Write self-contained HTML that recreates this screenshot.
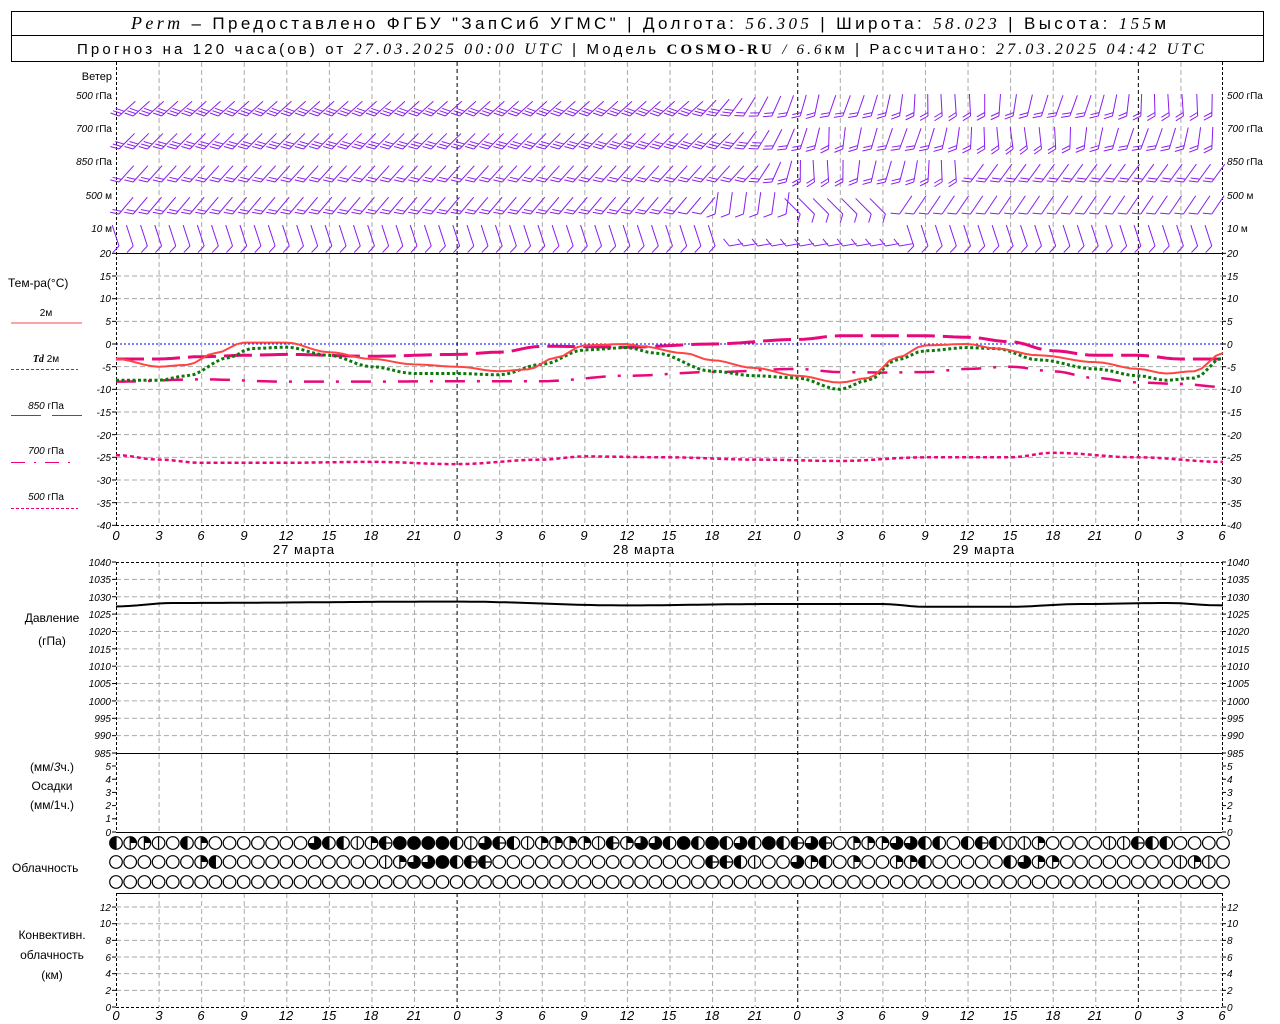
<!DOCTYPE html>
<html><head><meta charset="utf-8">
<style>
html,body{margin:0;padding:0;background:#fff;}
svg{display:block;}
text{font-family:"Liberation Sans",sans-serif;fill:#000;}
.n{font-size:10px;font-style:italic;}
.l{font-size:12px;}
.t{font-family:"Liberation Serif",serif;font-style:italic;}
</style></head><body>
<svg id="s" width="1280" height="1024" viewBox="0 0 1280 1024" xmlns="http://www.w3.org/2000/svg">
<rect x="11.5" y="11.5" width="1252" height="50" fill="none" stroke="#000"/>
<line x1="11" y1="35.5" x2="1264" y2="35.5" stroke="#000"/>
<text x="131" y="29" textLength="1035" lengthAdjust="spacing" style="font-size:17px"><tspan class="t" style="font-size:18px">Perm</tspan> – Предоставлено ФГБУ "ЗапСиб УГМС" | Долгота: <tspan class="t">56.305</tspan> | Широта: <tspan class="t">58.023</tspan> | Высота: <tspan class="t">155</tspan>м</text>
<text x="77" y="54" textLength="1127" lengthAdjust="spacing" style="font-size:15px">Прогноз на 120 часа(ов) от <tspan class="t" style="font-size:16px">27.03.2025 00:00 UTC</tspan>  | Модель <tspan style="font-family:'Liberation Serif',serif;font-weight:bold">COSMO-RU</tspan> <tspan class="t">/ 6.6</tspan>км | Рассчитано: <tspan class="t" style="font-size:16px">27.03.2025 04:42 UTC</tspan></text>
<g id="grid"></g>
<g id="data"></g>
<!-- left labels -->
<text x="112" y="80" text-anchor="end" class="l" style="font-size:11px">Ветер</text>
<g style="font-size:10px">
<text x="112" y="99" text-anchor="end"><tspan font-style="italic">500</tspan> гПа</text>
<text x="112" y="132" text-anchor="end"><tspan font-style="italic">700</tspan> гПа</text>
<text x="112" y="165" text-anchor="end"><tspan font-style="italic">850</tspan> гПа</text>
<text x="112" y="199" text-anchor="end"><tspan font-style="italic">500</tspan> м</text>
<text x="112" y="232" text-anchor="end"><tspan font-style="italic">10</tspan>   м</text>
<text x="1227" y="99"><tspan font-style="italic">500</tspan> гПа</text>
<text x="1227" y="132"><tspan font-style="italic">700</tspan> гПа</text>
<text x="1227" y="165"><tspan font-style="italic">850</tspan> гПа</text>
<text x="1227" y="199"><tspan font-style="italic">500</tspan> м</text>
<text x="1227" y="232"><tspan font-style="italic">10</tspan>   м</text>
</g>
<text x="8" y="287" class="l">Тем-ра(°С)</text>
<text x="46" y="316" text-anchor="middle" style="font-size:10px">2м</text>
<line x1="11" y1="323" x2="82" y2="323" stroke="#f44" stroke-width="1"/>
<text x="46" y="362" text-anchor="middle" style="font-size:10px"><tspan font-style="italic" font-weight="bold" font-family="Liberation Serif">Td</tspan>  2м</text>
<line x1="11" y1="369.5" x2="78" y2="369.5" stroke="#080" stroke-dasharray="3,2"/>
<text x="46" y="409" text-anchor="middle" style="font-size:10px"><tspan font-style="italic">850</tspan> гПа</text>
<line x1="11" y1="415.5" x2="41" y2="415.5" stroke="#e07"/><line x1="52" y1="415.5" x2="82" y2="415.5" stroke="#e07"/>
<text x="46" y="454" text-anchor="middle" style="font-size:10px"><tspan font-style="italic">700</tspan> гПа</text>
<line x1="11" y1="462.5" x2="78" y2="462.5" stroke="#e07" stroke-dasharray="14,9,2,9"/>
<text x="46" y="500" text-anchor="middle" style="font-size:10px"><tspan font-style="italic">500</tspan> гПа</text>
<line x1="11" y1="508.5" x2="78" y2="508.5" stroke="#e07" stroke-dasharray="3,2"/>
<text x="52" y="622" text-anchor="middle" class="l">Давление</text>
<text x="52" y="645" text-anchor="middle" class="l">(гПа)</text>
<text x="52" y="771" text-anchor="middle" class="l">(мм/<tspan font-style="italic">3</tspan>ч.)</text>
<text x="52" y="790" text-anchor="middle" class="l">Осадки</text>
<text x="52" y="809" text-anchor="middle" class="l">(мм/1ч.)</text>
<text x="12" y="872" class="l">Облачность</text>
<text x="52" y="939" text-anchor="middle" class="l">Конвективн.</text>
<text x="52" y="959" text-anchor="middle" class="l">облачность</text>
<text x="52" y="979" text-anchor="middle" class="l">(км)</text>
<!-- temp axis -->
<g class="n" text-anchor="end">
<text x="111" y="257">20</text><text x="111" y="280">15</text><text x="111" y="302">10</text><text x="111" y="325">5</text><text x="111" y="348">0</text><text x="111" y="371">-5</text><text x="111" y="393">-10</text><text x="111" y="416">-15</text><text x="111" y="439">-20</text><text x="111" y="461">-25</text><text x="111" y="484">-30</text><text x="111" y="507">-35</text><text x="111" y="529">-40</text>
<text x="111" y="566">1040</text><text x="111" y="583">1035</text><text x="111" y="601">1030</text><text x="111" y="618">1025</text><text x="111" y="635">1020</text><text x="111" y="653">1015</text><text x="111" y="670">1010</text><text x="111" y="687">1005</text><text x="111" y="705">1000</text><text x="111" y="722">995</text><text x="111" y="739">990</text><text x="111" y="757">985</text>
<text x="111" y="770">5</text><text x="111" y="783">4</text><text x="111" y="796">3</text><text x="111" y="809">2</text><text x="111" y="822">1</text><text x="111" y="836">0</text>
<text x="111" y="911">12</text><text x="111" y="927">10</text><text x="111" y="944">8</text><text x="111" y="961">6</text><text x="111" y="977">4</text><text x="111" y="994">2</text><text x="111" y="1011">0</text>
</g>
<g class="n">
<text x="1227" y="257">20</text><text x="1227" y="280">15</text><text x="1227" y="302">10</text><text x="1227" y="325">5</text><text x="1227" y="348">0</text><text x="1227" y="371">-5</text><text x="1227" y="393">-10</text><text x="1227" y="416">-15</text><text x="1227" y="439">-20</text><text x="1227" y="461">-25</text><text x="1227" y="484">-30</text><text x="1227" y="507">-35</text><text x="1227" y="529">-40</text>
<text x="1227" y="566">1040</text><text x="1227" y="583">1035</text><text x="1227" y="601">1030</text><text x="1227" y="618">1025</text><text x="1227" y="635">1020</text><text x="1227" y="653">1015</text><text x="1227" y="670">1010</text><text x="1227" y="687">1005</text><text x="1227" y="705">1000</text><text x="1227" y="722">995</text><text x="1227" y="739">990</text><text x="1227" y="757">985</text>
<text x="1227" y="770">5</text><text x="1227" y="783">4</text><text x="1227" y="796">3</text><text x="1227" y="809">2</text><text x="1227" y="822">1</text><text x="1227" y="836">0</text>
<text x="1227" y="911">12</text><text x="1227" y="927">10</text><text x="1227" y="944">8</text><text x="1227" y="961">6</text><text x="1227" y="977">4</text><text x="1227" y="994">2</text><text x="1227" y="1011">0</text>
</g>
<g style="font-size:13px;font-style:italic" text-anchor="middle">
<text x="116" y="540">0</text><text x="159" y="540">3</text><text x="201" y="540">6</text><text x="244" y="540">9</text><text x="286" y="540">12</text><text x="329" y="540">15</text><text x="371" y="540">18</text><text x="414" y="540">21</text><text x="457" y="540">0</text><text x="499" y="540">3</text><text x="542" y="540">6</text><text x="584" y="540">9</text><text x="627" y="540">12</text><text x="669" y="540">15</text><text x="712" y="540">18</text><text x="755" y="540">21</text><text x="797" y="540">0</text><text x="840" y="540">3</text><text x="882" y="540">6</text><text x="925" y="540">9</text><text x="967" y="540">12</text><text x="1010" y="540">15</text><text x="1053" y="540">18</text><text x="1095" y="540">21</text><text x="1138" y="540">0</text><text x="1180" y="540">3</text><text x="1222" y="540">6</text>
<text x="116" y="1020">0</text><text x="159" y="1020">3</text><text x="201" y="1020">6</text><text x="244" y="1020">9</text><text x="286" y="1020">12</text><text x="329" y="1020">15</text><text x="371" y="1020">18</text><text x="414" y="1020">21</text><text x="457" y="1020">0</text><text x="499" y="1020">3</text><text x="542" y="1020">6</text><text x="584" y="1020">9</text><text x="627" y="1020">12</text><text x="669" y="1020">15</text><text x="712" y="1020">18</text><text x="755" y="1020">21</text><text x="797" y="1020">0</text><text x="840" y="1020">3</text><text x="882" y="1020">6</text><text x="925" y="1020">9</text><text x="967" y="1020">12</text><text x="1010" y="1020">15</text><text x="1053" y="1020">18</text><text x="1095" y="1020">21</text><text x="1138" y="1020">0</text><text x="1180" y="1020">3</text><text x="1222" y="1020">6</text>
</g>
<g style="font-size:13px;letter-spacing:1px" text-anchor="middle">
<text x="304" y="554">27 марта</text><text x="644" y="554">28 марта</text><text x="984" y="554">29 марта</text>
</g>
</svg>
<script>
(function(){
var NS="http://www.w3.org/2000/svg";
var G=document.getElementById('grid'),D=document.getElementById('data');
function el(p,tag,a){var e=document.createElementNS(NS,tag);for(var k in a)e.setAttribute(k,a[k]);p.appendChild(e);return e;}
function X(h){return 116+h*1107/78;}
function line(p,x1,y1,x2,y2,st,w,da){var a={x1:x1,y1:y1,x2:x2,y2:y2,stroke:st,'stroke-width':w||1};if(da)a['stroke-dasharray']=da;return el(p,'line',a);}
for(var v=15;v>=-35;v-=5){var y=344-v*4.533;line(G,116,y,1222,y,v==0?'#00f':'#aaa',1,v==0?'2,2':'5,3');}
for(var v=1035;v>=990;v-=5){var y=562+(1040-v)*3.473;line(G,116,y,1222,y,'#aaa',1,'5,3');}
for(var v=2;v<=12;v+=2){var y=1007-v*8.33;line(G,116,y,1222,y,'#aaa',1,'5,3');}
var segs=[[62,525],[562,832],[893,1007]];
for(var h=3;h<78;h+=3){var x=X(h)+0.5,day=(h%24==0);
 segs.forEach(function(s){line(G,x,s[0],x,s[1],day?'#000':'#aaa',1,day?'4,3':'5,3');});}
segs.forEach(function(s){line(G,116.5,s[0],116.5,s[1],'#000',1,'3,2');line(G,1222.5,s[0],1222.5,s[1],'#000',1,'3,2');});
function ticks(a){a.forEach(function(y){line(G,112,y,116,y,'#000');line(G,1222,y,1226,y,'#000');});}
var ty=[];for(var v=20;v>=-40;v-=5)ty.push(344-v*4.533);ticks(ty);
ty=[];for(var v=1040;v>=985;v-=5)ty.push(562+(1040-v)*3.473);ticks(ty);
ty=[];for(var v=0;v<=5;v++)ty.push(832-v*13.2);ticks(ty);
ty=[];for(var v=0;v<=12;v+=2)ty.push(1007-v*8.33);ticks(ty);
line(G,116,253.5,1222,253.5,'#000');line(G,116,525.5,1222,525.5,'#000',1,'3,2');
line(G,116,562.5,1222,562.5,'#000',1,'3,2');line(G,116,753.5,1222,753.5,'#000');
line(G,116,832.5,1222,832.5,'#000');line(G,116,893.5,1222,893.5,'#000');line(G,116,1007.5,1222,1007.5,'#000',1,'3,2');
function interp(pts,h){for(var i=0;i<pts.length-1;i++){if(h<=pts[i+1][0]){var a=pts[i],b=pts[i+1],t=(h-a[0])/(b[0]-a[0]);t=(1-Math.cos(t*Math.PI))/2;return a[1]+(b[1]-a[1])*t;}}return pts[pts.length-1][1];}
function curve(pts,fy,col,w,da){var d='';for(var h=0;h<=78;h+=0.5){d+=(h?'L':'M')+X(h).toFixed(1)+','+fy(interp(pts,h)).toFixed(1);}var a={d:d,fill:'none',stroke:col,'stroke-width':w};if(da)a['stroke-dasharray']=da;el(D,'path',a);}
function TY(v){return 344-v*4.533;}
curve([[0,-8.3],[6,-7.8],[12,-8.3],[18,-8.3],[24,-8.2],[30,-8.2],[36,-7],[42,-6.2],[48,-5.5],[51,-6.2],[54,-6.3],[57,-6.2],[60,-5.5],[63,-5],[66,-6],[69,-7.5],[72,-8.5],[75,-8.8],[78,-9.5]],TY,'#e8087a',2.5,'20,12,3,12');
curve([[0,-3.3],[3,-3.3],[6,-2.8],[9,-2.5],[12,-2.3],[18,-2.7],[24,-2.3],[27,-1.8],[30,-0.5],[36,-0.7],[42,0],[48,1],[51,1.8],[57,1.8],[60,1.5],[63,0.5],[66,-1.5],[69,-2.5],[72,-2.5],[75,-3.3],[78,-3.3]],TY,'#e8087a',3,'28,8');
curve([[0,-24.5],[3,-25.5],[6,-26.2],[12,-26.2],[18,-26],[24,-26.5],[30,-25.5],[33,-24.8],[39,-25],[45,-25.5],[51,-25.8],[57,-25],[63,-25],[66,-24],[72,-25],[78,-26]],TY,'#e8087a',2.5,'4,3');
curve([[0,-8],[3,-8],[5,-7],[8,-3],[9.5,-1],[12,-0.7],[15,-2.5],[18,-5],[21,-6.5],[24,-6.5],[27,-6.8],[30,-4.5],[33,-1.3],[36,-0.8],[38,-2],[42,-6],[45,-7],[48,-7.5],[51,-10],[53,-8],[55,-3.5],[57,-1.5],[60,-0.8],[62,-1],[65,-3.5],[69,-5.5],[72,-7],[74,-8],[76,-7.5],[78,-3]],TY,'#0a7a0a',3,'3,2.5');
curve([[0,-3.3],[3,-5],[5,-4.6],[7,-2],[9,0.3],[12,0.3],[15,-1.8],[18,-3.3],[21,-4.5],[24,-5],[27,-6],[29,-5.6],[31,-3],[33,-0.3],[36,0],[37,-0.5],[40,-2],[42,-3.6],[45,-5.3],[48,-7],[51,-8.5],[53,-7.5],[55,-3],[57,-0.3],[60,0],[62,-1],[65,-2.5],[69,-4],[72,-5.5],[74,-6.5],[76,-6],[78,-2]],TY,'#f44',2);
curve([[0,1027.2],[4,1028.2],[24,1028.6],[36,1027.5],[46,1027.9],[54,1027.9],[57,1027.1],[63,1027.1],[68,1027.9],[74,1028.2],[78,1027.5]],function(v){return 562+(1040-v)*3.473;},'#000',2);
var PUR='#8a1cf0';
var lev=[
 {y:116,f:function(h){return h<40?48:h<50?48-(h-40)*4:8+12*Math.sin(h/2.5);},n:function(h){return h<44?3:2;}},
 {y:149,f:function(h){return h<42?45:h<50?45-(h-42)*4.5:6+14*Math.sin(h/2.7);},n:function(h){return h<46?3:2;}},
 {y:182,f:function(h){return h<44?42:h<48?42-(h-44)*9:h<60?6-10*Math.sin(h/1.5):36;},n:function(h){return 2;}},
 {y:214,f:function(h){return h<42?40:h<48?8:h<55?-45:34;},n:function(h){return h<40?2:1;}},
 {y:246,f:function(h){return (h>42&&h<56)?80:-18;},n:function(h){return 1;}}
];
lev.forEach(function(L,li){
 for(var h=0;h<=77;h++){
  var x=X(h)+3,a=L.f(h)*Math.PI/180,len=(li==4&&h>42&&h<56)?14:22;
  var tx=x+Math.sin(a)*len,ty=L.y-Math.cos(a)*len;
  line(D,x,L.y,tx,ty,PUR,1);
  var n=L.n(h);
  for(var k=0;k<n;k++){
   var bx=x+Math.sin(a)*k*3.5,by=L.y-Math.cos(a)*k*3.5;
   var fa=a-Math.PI/2-0.5;
   line(D,bx,by,bx+Math.sin(fa)*9,by-Math.cos(fa)*9,PUR,1);
  }
 }
});
var rows=[
"hqq|OhqOOOOOOOthh|q5FFFFh|t5h|qqqq|5qtt" + "hFhFhthFh5t5OqqqtthhOh5h||qOOOO||5hhOO",
"OOOOOOqhOOOOOOOOOOO|qttFh55OOOOOOOOOOOOO" + "OO55h|OOtqhOqOOqqhOOOOOhtqqOOOOOOOO|q|O",
"OOOOOOOOOOOOOOOOOOOOOOOOOOOOOOOOOOOOOOOO" + "OOOOOOOOOOOOOOOOOOOOOOOOOOOOOOOOOOOOOOO"];
var cy=[843,862,882],r=6.3;
function wedge(cx,cy,a0,a1){var p='M'+cx+','+cy;for(var t=a0;t<=a1+0.01;t+=Math.PI/16){p+='L'+(cx+r*Math.cos(t)).toFixed(2)+','+(cy+r*Math.sin(t)).toFixed(2);}el(D,'path',{d:p+'Z',fill:'#000'});}
rows.forEach(function(s,ri){
 for(var i=0;i<79;i++){
  var c=s.charAt(i)||'O',cx=X(i),y=cy[ri];
  el(D,'circle',{cx:cx,cy:y,r:r,fill:'#fff',stroke:'#000','stroke-width':1.2});
  var P=Math.PI;
  if(c=='q')wedge(cx,y,-P/2,0);
  if(c=='h')wedge(cx,y,P/2,3*P/2);
  if(c=='t')wedge(cx,y,-P/2,P);
  if(c=='5'){wedge(cx,y,P/2,3*P/2);line(D,cx,y,cx+r,y,'#000',1.2);}
  if(c=='F')el(D,'circle',{cx:cx,cy:y,r:r,fill:'#000'});
  if(c!='O'&&c!='F')line(D,cx,y-r,cx,y+r,'#000',1.2);
 }
});
})();
</script>
</body></html>
